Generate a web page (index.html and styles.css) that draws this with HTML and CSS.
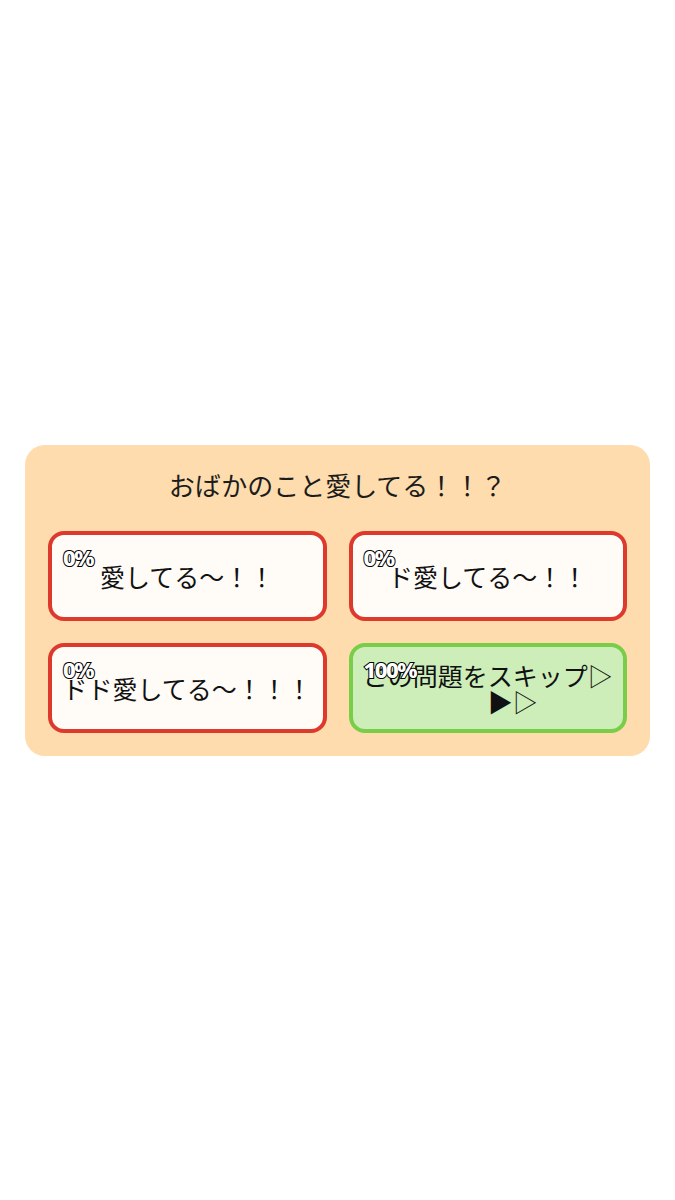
FILE: index.html
```html
<!DOCTYPE html>
<html lang="ja">
<head>
<meta charset="utf-8">
<title>quiz</title>
<link rel="stylesheet" href="styles.css">
</head>
<body>
<main class="stage">
  <section class="panel">
    <h1 class="question">おばかのこと愛してる！！？</h1>
    <div class="choices">
      <button class="choice">
        <span class="pct">0%</span>
        <span class="label">愛してる～！！</span>
      </button>
      <button class="choice">
        <span class="pct">0%</span>
        <span class="label">ド愛してる～！！</span>
      </button>
      <button class="choice">
        <span class="pct">0%</span>
        <span class="label">ドド愛してる～！！！</span>
      </button>
      <button class="choice skip">
        <span class="pct">100%</span>
        <span class="label">この問題をスキップ▷<br><span class="tail">▶▷</span></span>
      </button>
    </div>
  </section>
</main>
</body>
</html>
```

FILE: styles.css
```css
html, body {
  margin: 0;
  padding: 0;
  background: #ffffff;
}
body {
  font-family: "Noto Sans CJK JP", "Noto Sans", sans-serif;
  color: #1a1a1a;
}
.stage {
  min-height: 100vh;
  display: flex;
  align-items: center;
  justify-content: center;
}
.panel {
  width: 625px;
  box-sizing: border-box;
  background: #fedcad;
  border-radius: 20px;
  padding: 20px 23px 23px;
}
.question {
  margin: 0 0 26px;
  font-size: 26px;
  font-weight: 400;
  line-height: 40px;
  text-align: center;
  color: #1c1c1c;
}
.choices {
  display: grid;
  grid-template-columns: 1fr 1fr;
  gap: 22px;
}
.choice {
  position: relative;
  height: 90px;
  box-sizing: border-box;
  border: 4px solid #dd3a2d;
  border-radius: 16px;
  background: #fffbf7;
  display: flex;
  align-items: center;
  justify-content: center;
  padding: 0 6px;
  font-family: "Noto Sans CJK JP", "Noto Sans", sans-serif;
  font-size: 25px;
  line-height: 26px;
  color: #111;
  text-align: center;
}
.choice.skip {
  background: #cdeeb9;
  border-color: #79cd49;
}
.label {
  display: block;
}
.tail {
  display: inline-block;
  padding-left: 50px;
}
.pct {
  position: absolute;
  left: 11px;
  top: 10px;
  font-family: "Noto Sans", sans-serif;
  font-weight: 800;
  font-size: 22px;
  line-height: 24px;
  letter-spacing: -1.5px;
  color: #ffffff;
  -webkit-text-stroke: 2px #000;
  paint-order: stroke fill;
}
```
